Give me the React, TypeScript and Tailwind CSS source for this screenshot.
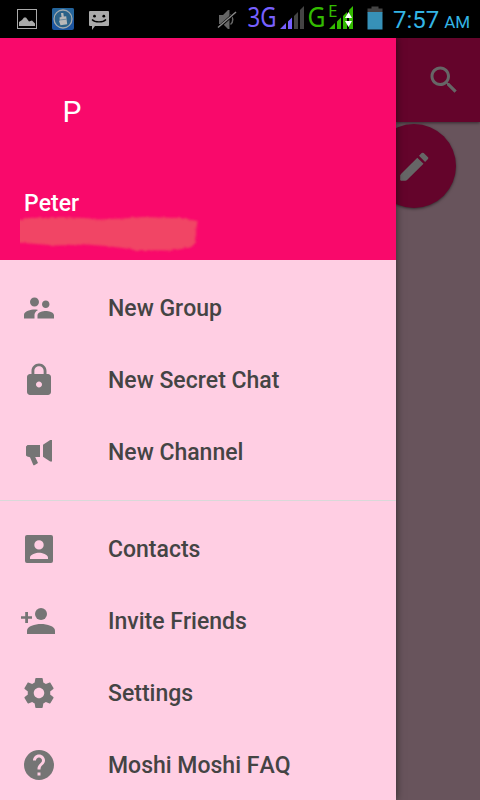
import type { ReactNode } from "react";

type Item = { label: string; icon: ReactNode };

function Icon({ children }: { children: ReactNode }) {
  return (
    <svg className="size-9 shrink-0 overflow-visible" viewBox="0 0 36 36" fill="#757575">
      {children}
    </svg>
  );
}

// 24-unit material path inside the 36px icon box
function MaterialIcon({ d }: { d: string }) {
  return (
    <Icon>
      <path transform="scale(1.5)" d={d} />
    </Icon>
  );
}

const actions: Item[] = [
  {
    label: "New Group",
    icon: (
      <MaterialIcon d="M16.5 12c1.38 0 2.49-1.12 2.49-2.5S17.88 7 16.5 7 14 8.12 14 9.5s1.12 2.5 2.5 2.5zM9 11c1.66 0 2.99-1.34 2.99-3S10.66 5 9 5C7.34 5 6 6.34 6 8s1.34 3 3 3zm7.5 3c-1.83 0-5.5.92-5.5 2.75V19h11v-2.25c0-1.83-3.67-2.75-5.5-2.75zM9 13c-2.33 0-7 1.17-7 3.5V19h7v-2.25c0-.85.33-2.34 2.37-3.47C10.5 13.1 9.66 13 9 13z" />
    ),
  },
  {
    label: "New Secret Chat",
    icon: (
      <MaterialIcon d="M18 8h-1V6c0-2.76-2.24-5-5-5S7 3.24 7 6v2H6c-1.1 0-2 .9-2 2v10c0 1.1.9 2 2 2h12c1.1 0 2-.9 2-2V10c0-1.1-.9-2-2-2zm-6 9c-1.1 0-2-.9-2-2s.9-2 2-2 2 .9 2 2-.9 2-2 2zm3.1-9H8.9V6c0-1.71 1.39-3.1 3.1-3.1 1.71 0 3.1 1.39 3.1 3.1v2z" />
    ),
  },
  {
    label: "New Channel",
    icon: (
      <Icon>
        <path d="M6.5 11H19v12h-4.8l2.800 6-3.600 2.200h-1L9 23.200 6.200 22.600 5 21.400V12.500z" />
        <path d="M22 10.800 29.200 6H31v21.600h-1.800L22 22.800z" />
      </Icon>
    ),
  },
];

const links: Item[] = [
  {
    label: "Contacts",
    icon: (
      <Icon>
        <path
          fillRule="evenodd"
          d="M6 4h24a2 2 0 0 1 2 2v24a2 2 0 0 1-2 2H6a2 2 0 0 1-2-2V6a2 2 0 0 1 2-2zm12 5.200a4.700 4.700 0 1 0 0 9.400 4.700 4.700 0 0 0 0-9.400zM9 28h18v-1.500c0-3-6-4.700-9-4.700s-9 1.700-9 4.700z"
        />
      </Icon>
    ),
  },
  {
    label: "Invite Friends",
    icon: (
      <Icon>
        <circle cx="20" cy="11" r="6" />
        <path d="M6 31v-3.400C6 23.200 14 21 20 21s14 2.200 14 6.600V31z" />
        <path d="M4.200 9h2.800v4.200h4v2.600H7V20H4.200v-4.200H0v-2.600h4.200z" />
      </Icon>
    ),
  },
  {
    label: "Settings",
    icon: (
      <MaterialIcon d="M19.43 12.98c.04-.32.07-.64.07-.98s-.03-.66-.07-.98l2.11-1.65c.19-.15.24-.42.12-.64l-2-3.46c-.12-.22-.39-.3-.61-.22l-2.490 1c-.52-.4-1.080-.73-1.690-.98l-.38-2.650C14.460 2.180 14.250 2 14 2h-4c-.25 0-.46.18-.49.42l-.38 2.650c-.61.25-1.170.59-1.690.98l-2.490-1c-.23-.09-.49 0-.61.22l-2 3.460c-.13.22-.07.49.12.64l2.110 1.650c-.04.32-.07.65-.07.98s.03.66.07.98l-2.110 1.650c-.19.15-.24.42-.12.64l2 3.460c.12.22.39.3.61.22l2.490-1c.52.4 1.080.73 1.690.98l.38 2.650c.03.24.24.42.49.42h4c.25 0 .46-.18.49-.42l.38-2.650c.61-.25 1.170-.59 1.690-.98l2.490 1c.23.09.49 0 .61-.22l2-3.460c.12-.22.07-.49-.12-.64l-2.110-1.650zM12 15.500c-1.930 0-3.500-1.570-3.500-3.500s1.570-3.500 3.500-3.500 3.500 1.570 3.500 3.500-1.570 3.500-3.500 3.500z" />
    ),
  },
  {
    label: "Moshi Moshi FAQ",
    icon: (
      <MaterialIcon d="M12 2C6.480 2 2 6.480 2 12s4.480 10 10 10 10-4.480 10-10S17.520 2 12 2zm1 17h-2v-2h2v2zm2.070-7.750l-.9.920C13.450 12.900 13 13.500 13 15h-2v-.5c0-1.100.45-2.100 1.170-2.830l1.240-1.260c.37-.36.59-.86.59-1.410 0-1.100-.9-2-2-2s-2 .9-2 2H8c0-2.210 1.790-4 4-4s4 1.790 4 4c0 .88-.36 1.680-.93 2.250z" />
    ),
  },
];

function MenuRow({ label, icon }: Item) {
  return (
    <li className="flex h-[72px] items-center gap-[51px] pl-[21px]">
      {icon}
      <span className="text-[23px] leading-none font-medium whitespace-nowrap text-[#444] [font-kerning:none]">
        {label}
      </span>
    </li>
  );
}

function NotificationIcons() {
  return (
    <svg className="h-[38px] w-[112px]" viewBox="0 0 112 38">
      <rect x="17.500" y="9.500" width="19" height="19" fill="none" stroke="#aaa" />
      <path d="M19 26v-4l3-2 2-2.500h2l3 4 3-1 3 3V26z" fill="#aaa" />
      <rect x="52" y="8" width="22" height="22" rx="2" fill="#1c55a0" />
      <rect x="52" y="8" width="22" height="11" rx="2" fill="#24649a" />
      <circle cx="63" cy="19" r="9" fill="#2b6288" stroke="#a3aaad" strokeWidth="1.300" />
      <path d="M61 13h2.300l.5 3.500 2.400-.2 1 8-6.700 1-1.500-4.300.8-.5-.3-3 2-.5z" fill="#b8b8b8" />
      <path d="m59.500 20 7-.8" stroke="#5f7f92" strokeWidth=".8" />
      <path d="M90 11h18a1 1 0 0 1 1 1v13a1 1 0 0 1-1 1H95l-3 4v-4h-2a1 1 0 0 1-1-1V12a1 1 0 0 1 1-1z" fill="#aaa" />
      <circle cx="94.500" cy="16.200" r="1.400" />
      <circle cx="103.800" cy="16.200" r="1.400" />
      <path d="M92 19.500c3 3.200 11 3.200 14 0" fill="none" stroke="#000" strokeWidth="1.400" />
    </svg>
  );
}

function SignalIcons() {
  return (
    <svg
      className="h-[38px] w-[174px] font-['Noto_Sans','Open_Sans',sans-serif]"
      viewBox="214 0 174 38"
    >
      {/* muted speaker */}
      <path d="M219 15h4l5-5h1.500v19H228l-5-5h-4z" fill="#666" />
      <path d="M230.500 14.500c3 2 3 8 0 10" fill="none" stroke="#666" strokeWidth="1.500" />
      <path d="m218 28 18-16" stroke="#000" strokeWidth="3" />
      <path d="m218 27.500 18-15.500" stroke="#888" strokeWidth="1.500" />

      <text x="247.500" y="27" fontSize="26.500" textLength="29" lengthAdjust="spacingAndGlyphs" fill="#7760ff">
        3G
      </text>
      <path d="M280 29h6v-6zM288 29h4V17.500l-4 4z" fill="#7760ff" />
      <path d="M294 29h4V12l-4 4zM300 29h4V6l-4 4z" fill="#444" />

      <text x="307.500" y="27" fontSize="26.500" textLength="18" lengthAdjust="spacingAndGlyphs" fill="#3b0">
        G
      </text>
      <text x="328" y="17" fontSize="15.500" textLength="9.500" lengthAdjust="spacingAndGlyphs" fill="#3b0">
        E
      </text>
      <path d="M329 29h6v-6zM337 29h4V17.500l-4 4zM343 29h4V12l-4 4zM349 29h4V6l-4 4z" fill="#3b0" />
      <path d="m345 18 3.500-6 3.500 6zM345 21h7l-3.500 6z" fill="#fff" />

      <path d="M371.500 6.500h7V8.500h4v4h-15v-4h4z" fill="#444" />
      <path d="M367.500 12h15v17.500h-15z" fill="#3791b8" />
    </svg>
  );
}

function StatusBar() {
  return (
    <header className="flex h-[38px] shrink-0 items-center justify-between bg-black">
      <NotificationIcons />
      <div className="flex items-center">
        <SignalIcons />
        <div className="flex w-[92px] items-baseline gap-[5px] pt-[2px] pl-[5px] leading-none text-[#33b5e5]">
          <span className="text-[24px]">7:57</span>
          <span className="text-[17px]">AM</span>
        </div>
      </div>
    </header>
  );
}

function DrawerHeader() {
  return (
    <div className="h-[222px] shrink-0 bg-[#f9096b] text-white">
      <div className="pt-[26px] pl-6">
        <div className="flex size-24 items-center justify-center text-[30px] leading-none">P</div>
      </div>
      <p className="mt-[32px] pl-6 text-[23px] leading-[23px] font-medium [font-kerning:none]">Peter</p>
      <svg className="ml-5 h-[38px] w-[182px]" viewBox="20 215 182 38">
        <defs>
          <filter id="smear" x="-5%" y="-15%" width="110%" height="130%">
            <feTurbulence type="fractalNoise" baseFrequency="0.25" numOctaves="2" seed="4" />
            <feDisplacementMap in="SourceGraphic" scale="3" />
            <feGaussianBlur stdDeviation="1" />
          </filter>
        </defs>
        <path
          filter="url(#smear)"
          d="M16 220 28 218l27-1 30 1 12 1.500 25-1 20-1.500 40 1 10 2 5.500 1-3 23-4 3.500-18 3-38-.5-12-2-17-2-20-1.500-30 1-39-3z"
          fill="#f14465"
        />
      </svg>
    </div>
  );
}

function Drawer() {
  return (
    <aside className="z-10 flex w-[396px] shrink-0 flex-col bg-[#ffcee3] shadow-[0_0_8px_rgba(0,0,0,0.55)]">
      <DrawerHeader />
      <nav className="pt-3">
        <ul>
          {actions.map((item) => (
            <MenuRow key={item.label} {...item} />
          ))}
        </ul>
        <hr className="mt-3 mb-3 border-[#d9d9d9]" />
        <ul>
          {links.map((item) => (
            <MenuRow key={item.label} {...item} />
          ))}
        </ul>
      </nav>
    </aside>
  );
}

// The dimmed chat list behind the open drawer
function ChatList() {
  return (
    <main className="relative min-w-0 flex-1 bg-[#68545c]">
      <div className="flex h-[84px] items-center bg-[#64042b] pl-[29.5px] shadow-[0_1px_3px_rgba(0,0,0,0.5)]">
        <svg className="size-9" viewBox="0 0 24 24" fill="#666">
          <path d="M15.500 14h-.79l-.28-.27C15.410 12.590 16 11.110 16 9.500 16 5.910 13.090 3 9.500 3S3 5.910 3 9.500 5.910 16 9.500 16c1.610 0 3.090-.59 4.230-1.570l.27.28v.79l5 4.990L20.490 19l-4.990-5zm-6 0C7.010 14 5 11.990 5 9.500S7.010 5 9.500 5 14 7.010 14 9.500 11.990 14 9.500 14z" />
        </svg>
      </div>
      <div className="absolute top-[86px] -left-6 flex size-[84px] items-center justify-center rounded-full bg-[#64042b] shadow-[0_1px_3px_rgba(0,0,0,0.5)]">
        <svg className="size-[30px]" viewBox="399 151 30 30" fill="#666">
          <path d="m417.300 157.700 6.200 6-16.700 16.500-1.500.6h-4.300l-.8-.8v-4.500l.8-1.500z" />
          <path d="m419 155.800 2.700-2.700q1-.9 2 0l4.300 4.200q.8.8 0 1.600l-2.900 3z" />
        </svg>
      </div>
    </main>
  );
}

export default function App() {
  return (
    <div className="flex h-[800px] w-[480px] flex-col overflow-hidden font-[Roboto,sans-serif]">
      <StatusBar />
      <div className="flex min-h-0 flex-1">
        <Drawer />
        <ChatList />
      </div>
    </div>
  );
}
